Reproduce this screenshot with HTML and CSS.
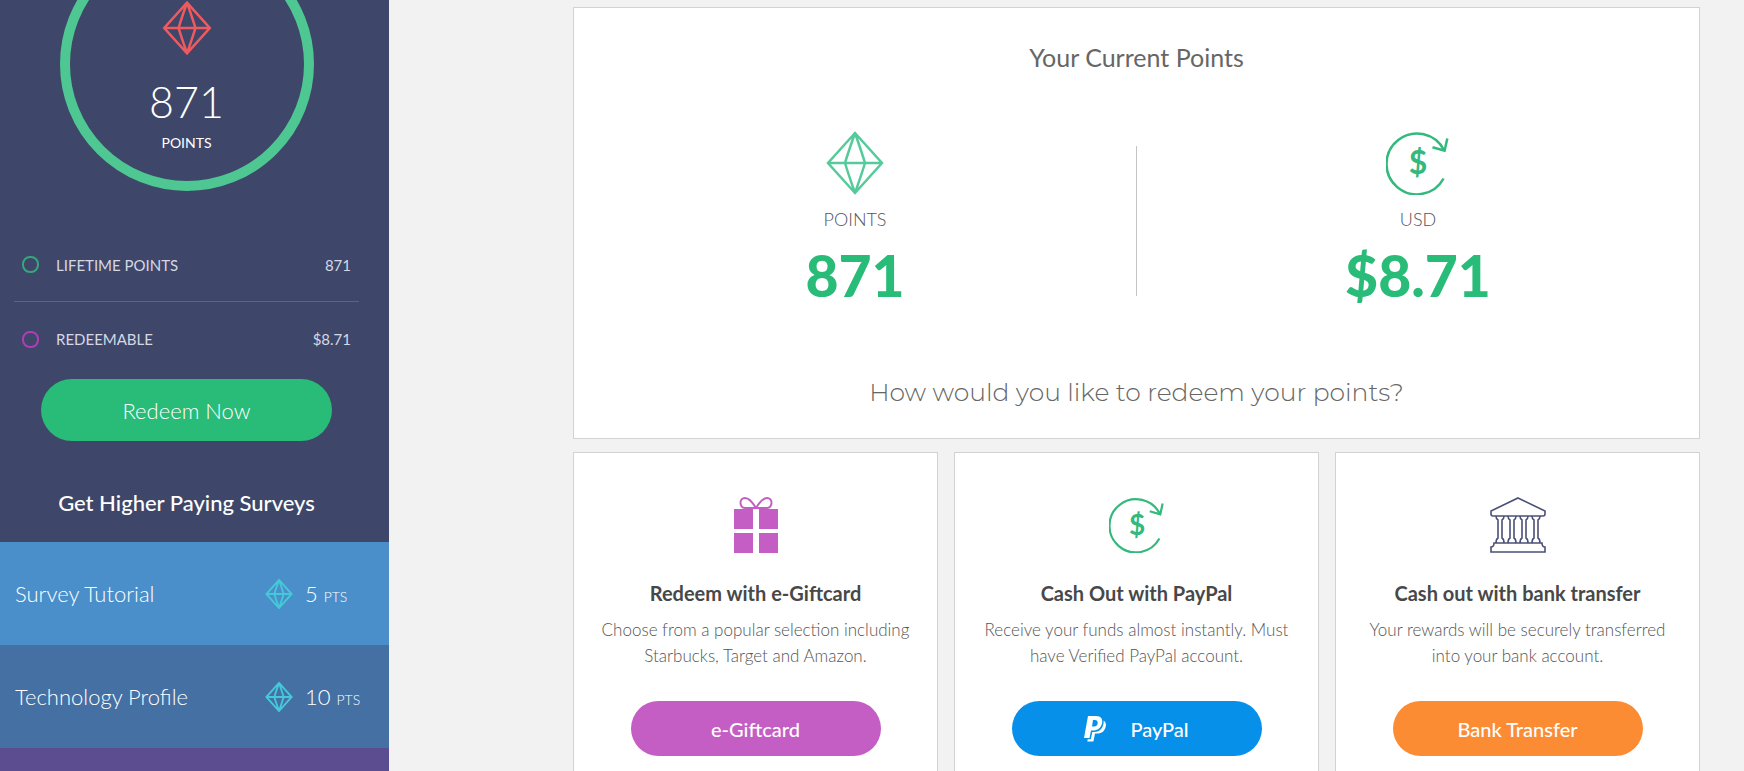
FILE: index.html
```html
<!DOCTYPE html>
<html lang="en">
  <head>
    <meta charset="UTF-8" />
    <meta name="viewport" content="width=device-width, initial-scale=1.0" />
    <title>Redeem points</title>
    <link rel="stylesheet" href="styles.css" />
  </head>
  <body>
    <!-- shared icons -->
    <svg class="sprite" aria-hidden="true">
      <symbol id="diamond" viewBox="0 0 58 64">
        <path d="M29 2 56 32 29 62 2 32ZM2 32H56M29 2Q22 22 19 32 22 42 29 62M29 2Q36 22 39 32 36 42 29 62" />
      </symbol>
    </svg>

    <div class="page">
      <!-- sidebar -->
      <aside class="sidebar">
        <div class="summary">
          <div class="ring">
            <svg class="ring-icon"><use href="#diamond" /></svg>
            <div class="ring-value">871</div>
            <div class="ring-label">POINTS</div>
          </div>
          <ul class="stats">
            <li class="stat">
              <span class="dot dot-green"></span>
              <span class="stat-name">LIFETIME POINTS</span>
              <span class="stat-value">871</span>
            </li>
            <li class="stat">
              <span class="dot dot-purple"></span>
              <span class="stat-name">REDEEMABLE</span>
              <span class="stat-value">$8.71</span>
            </li>
          </ul>
          <button class="redeem-btn" type="button">Redeem Now</button>
          <h2 class="surveys-title">Get Higher Paying Surveys</h2>
        </div>
        <nav class="surveys">
          <a class="survey survey-light" href="#">
            <span class="survey-name">Survey Tutorial</span>
            <svg class="survey-icon"><use href="#diamond" /></svg>
            <span class="survey-points">5 <small>PTS</small></span>
          </a>
          <a class="survey survey-blue" href="#">
            <span class="survey-name">Technology Profile</span>
            <svg class="survey-icon"><use href="#diamond" /></svg>
            <span class="survey-points">10 <small>PTS</small></span>
          </a>
          <div class="survey survey-purple"></div>
        </nav>
      </aside>

      <!-- content -->
      <main class="content">
        <section class="panel">
          <h1 class="panel-title">Your Current Points</h1>
          <div class="totals">
            <div class="total">
              <svg class="total-icon total-diamond"><use href="#diamond" /></svg>
              <div class="total-label">POINTS</div>
              <div class="total-value">871</div>
            </div>
            <div class="divider"></div>
            <div class="total">
              <svg class="total-icon cash-icon" viewBox="0 0 64 64">
                <path d="M57.6 47.5A30.4 30.4 0 1 1 58.2 19.5" />
                <path d="M46.5 16.3 58.6 19.8 61.3 7.5" />
                <text x="32" y="43" text-anchor="middle">$</text>
              </svg>
              <div class="total-label">USD</div>
              <div class="total-value">$8.71</div>
            </div>
          </div>
          <p class="question">How would you like to redeem your points?</p>
        </section>

        <div class="cards">
          <section class="card">
            <svg class="card-icon" viewBox="0 0 56 56">
              <path class="gift-box" d="M6 12H25V32H6ZM31 12H50V32H31ZM6 36H25V56H6ZM31 36H50V56H31Z" />
              <path class="gift-bow" d="M28 11C25 6 21 1 17 1 11 1 11 10 17 11H28M28 11C31 6 35 1 39 1 45 1 45 10 39 11H28" />
            </svg>
            <h3 class="card-title">Redeem with e-Giftcard</h3>
            <p class="card-text">Choose from a popular selection including Starbucks, Target and Amazon.</p>
            <button class="card-btn btn-purple" type="button">e-Giftcard</button>
          </section>

          <section class="card">
            <svg class="card-icon cash-icon" viewBox="0 0 64 64">
              <path d="M57.6 47.5A30.4 30.4 0 1 1 58.2 19.5" />
              <path d="M46.5 16.3 58.6 19.8 61.3 7.5" />
              <text x="32" y="43" text-anchor="middle">$</text>
            </svg>
            <h3 class="card-title">Cash Out with PayPal</h3>
            <p class="card-text">Receive your funds almost instantly. Must have Verified PayPal account.</p>
            <button class="card-btn btn-blue" type="button">
              <svg class="paypal-icon" viewBox="0 0 22 26">
                <path d="M4 0H12C17 0 19 3 18 7.5 17 12 13.5 14.5 9 14.5H7L5.5 22H0ZM9 4 8 10.5H10C12.5 10.5 13.5 9 13.7 7 13.9 5 12.5 4 11 4Z" fill-rule="evenodd" />
                <path d="M19.7 4.5C22 6.2 22.4 8.5 21.5 11.5 20 16 17 17.5 12.5 17.5H11L9.4 25.5H3.3L3.7 23.3H6.8L8.3 15.9H10.5C16 15.9 19.8 12 19.7 4.5Z" />
              </svg>
              PayPal
            </button>
          </section>

          <section class="card">
            <svg class="card-icon bank-icon" viewBox="0 0 56 56">
              <path d="M28 1 55 14V17Q55 19 53 19H3Q1 19 1 17V14Z" />
              <path d="M1 55V50Q4 50 4 46H52Q52 50 55 50V55Z" />
              <path d="M6 19Q6 22 8 23V41Q6 42 6 46M14 46Q14 42 12 41V23Q14 22 14 19M18 19Q18 22 20 23V41Q18 42 18 46M26 46Q26 42 24 41V23Q26 22 26 19M30 19Q30 22 32 23V41Q30 42 30 46M38 46Q38 42 36 41V23Q38 22 38 19M42 19Q42 22 44 23V41Q42 42 42 46M50 46Q50 42 48 41V23Q50 22 50 19" />
            </svg>
            <h3 class="card-title">Cash out with bank transfer</h3>
            <p class="card-text">Your rewards will be securely transferred into your bank account.</p>
            <button class="card-btn btn-orange" type="button">Bank Transfer</button>
          </section>
        </div>
      </main>
    </div>
  </body>
</html>
```
FILE: styles.css
```css
* {
  box-sizing: border-box;
  padding: 0;
  margin: 0;
}

body {
  height: 100vh;
  overflow: hidden;

  font-family: Lato, sans-serif;
  background-color: #f2f2f2;
}

button {
  border: 0;
  font-family: inherit;
  color: #fff;
  cursor: pointer;
}

.sprite {
  position: absolute;
  width: 0;
  height: 0;
}

.page {
  display: flex;
}

/* sidebar */
.sidebar {
  flex: none;
  width: 389px;

  color: #fff;
  background-color: #3e4769;
}

.summary {
  display: flex;
  flex-direction: column;
  align-items: center;
  padding-right: 16px;
}

.ring {
  display: flex;
  flex-direction: column;
  align-items: center;
  width: 254px;
  height: 254px;
  margin-top: -63px;
  padding-top: 54px;

  border: 10px solid #4ec792;
  border-radius: 50%;
}

.ring-icon {
  width: 50px;
  height: 54px;

  fill: none;
  stroke: #f05a5f;
  stroke-width: 3;
}

.ring-value {
  margin-top: 21px;

  font-size: 43px;
  font-weight: 300;
  line-height: 52px;
}

.ring-label {
  margin-top: 5px;

  font-size: 14px;
  line-height: 20px;
}

.stats {
  width: 345px;
  margin-top: 37px;

  list-style: none;
}

.stat {
  display: flex;
  align-items: center;
  height: 74px;
  padding: 0 8px;

  font-size: 15px;
  color: #d5d8e4;
}

.stat:first-child {
  border-bottom: 1px solid #5d6577;
}

.dot {
  width: 17px;
  height: 17px;
  margin-right: 17px;

  border: 2px solid #37a67c;
  border-radius: 8px;
}

.dot-purple {
  border-color: #b03cb8;
}

.stat-value {
  margin-left: auto;
}

.redeem-btn {
  width: 291px;
  height: 62px;
  margin-top: 3px;

  font-size: 22px;
  font-weight: 300;

  background-color: #29bb78;
  border-radius: 31px;
}

.surveys-title {
  margin: 46px 0 23px;

  font-size: 22px;
  font-weight: 500;
  line-height: 32px;
}

.survey {
  display: flex;
  align-items: center;
  height: 103px;
  padding-left: 15px;

  font-size: 22px;
  font-weight: 300;
  color: #fff;
  text-decoration: none;
}

.survey-light {
  background-color: #4a8fca;
}

.survey-blue {
  background-color: #4570a4;
}

.survey-purple {
  background-color: #5c4d91;
}

.survey-name {
  flex: 1;
}

.survey-icon {
  width: 28px;
  height: 30px;
  margin-right: 12px;

  fill: none;
  stroke: #45c8d8;
  stroke-width: 4;
}

.survey-points {
  width: 84px;
}

.survey-points small {
  font-size: 14px;
}

/* content */
.content {
  flex: 1;
  padding: 7px 44px 0 184px;
}

.panel,
.card {
  display: flex;
  flex-direction: column;
  align-items: center;

  text-align: center;

  background-color: #fff;
  border: 1px solid #d2d2d2;
}

.panel {
  padding: 33px 0 30px;
}

.panel-title {
  font-size: 25px;
  font-weight: 400;
  line-height: 32px;
  color: #666;
}

.totals {
  display: flex;
  align-items: center;
  width: 100%;
  margin-top: 58px;
}

.total {
  display: flex;
  flex: 1;
  flex-direction: column;
  align-items: center;
}

.total-icon {
  width: 64px;
  height: 64px;
}

.total-diamond {
  fill: none;
  stroke: #55cb9b;
  stroke-width: 2.5;
}

.cash-icon {
  fill: none;
  stroke: #33b97d;
  stroke-width: 2.5;
}

.cash-icon text {
  font-size: 32px;
  font-weight: 700;

  fill: #33b97d;
  stroke: none;
}

.total-label {
  margin-top: 12px;

  font-size: 18px;
  font-weight: 300;
  line-height: 24px;
  color: #555;
}

.total-value {
  margin-top: 8px;

  font-size: 57px;
  font-weight: 900;
  line-height: 72px;
  color: #29bb78;
}

.divider {
  width: 1px;
  height: 150px;

  background-color: #c4c4c4;
}

.question {
  margin-top: 65px;

  font-family: Montserrat, Inter, sans-serif;
  font-size: 25px;
  font-weight: 300;
  line-height: 32px;
  color: #666;
}

.cards {
  display: grid;
  grid-template-columns: repeat(3, 1fr);
  gap: 16px;
  margin-top: 13px;
}

.card {
  padding: 44px 24px 40px;
}

.card-icon {
  width: 56px;
  height: 56px;
}

.gift-box {
  fill: #c45ec4;
}

.gift-bow {
  fill: none;
  stroke: #c45ec4;
  stroke-width: 2;
}

.bank-icon {
  fill: none;
  stroke: #4a5076;
  stroke-width: 1.6;
}

.card-title {
  margin-top: 24px;

  font-size: 20px;
  font-weight: 700;
  line-height: 32px;
  color: #484848;
}

.card-text {
  margin-top: 8px;

  font-size: 17px;
  font-weight: 300;
  line-height: 26px;
  color: #555;
}

.card-btn {
  display: flex;
  align-items: center;
  justify-content: center;
  gap: 24px;
  width: 250px;
  height: 55px;
  margin-top: 32px;

  font-size: 20px;
  font-weight: 500;

  border-radius: 28px;
}

.btn-purple {
  background-color: #c45ec4;
}

.btn-blue {
  background-color: #0790ea;
}

.btn-orange {
  background-color: #fb8c34;
}

.paypal-icon {
  width: 22px;
  height: 26px;

  fill: #fff;
}
```
